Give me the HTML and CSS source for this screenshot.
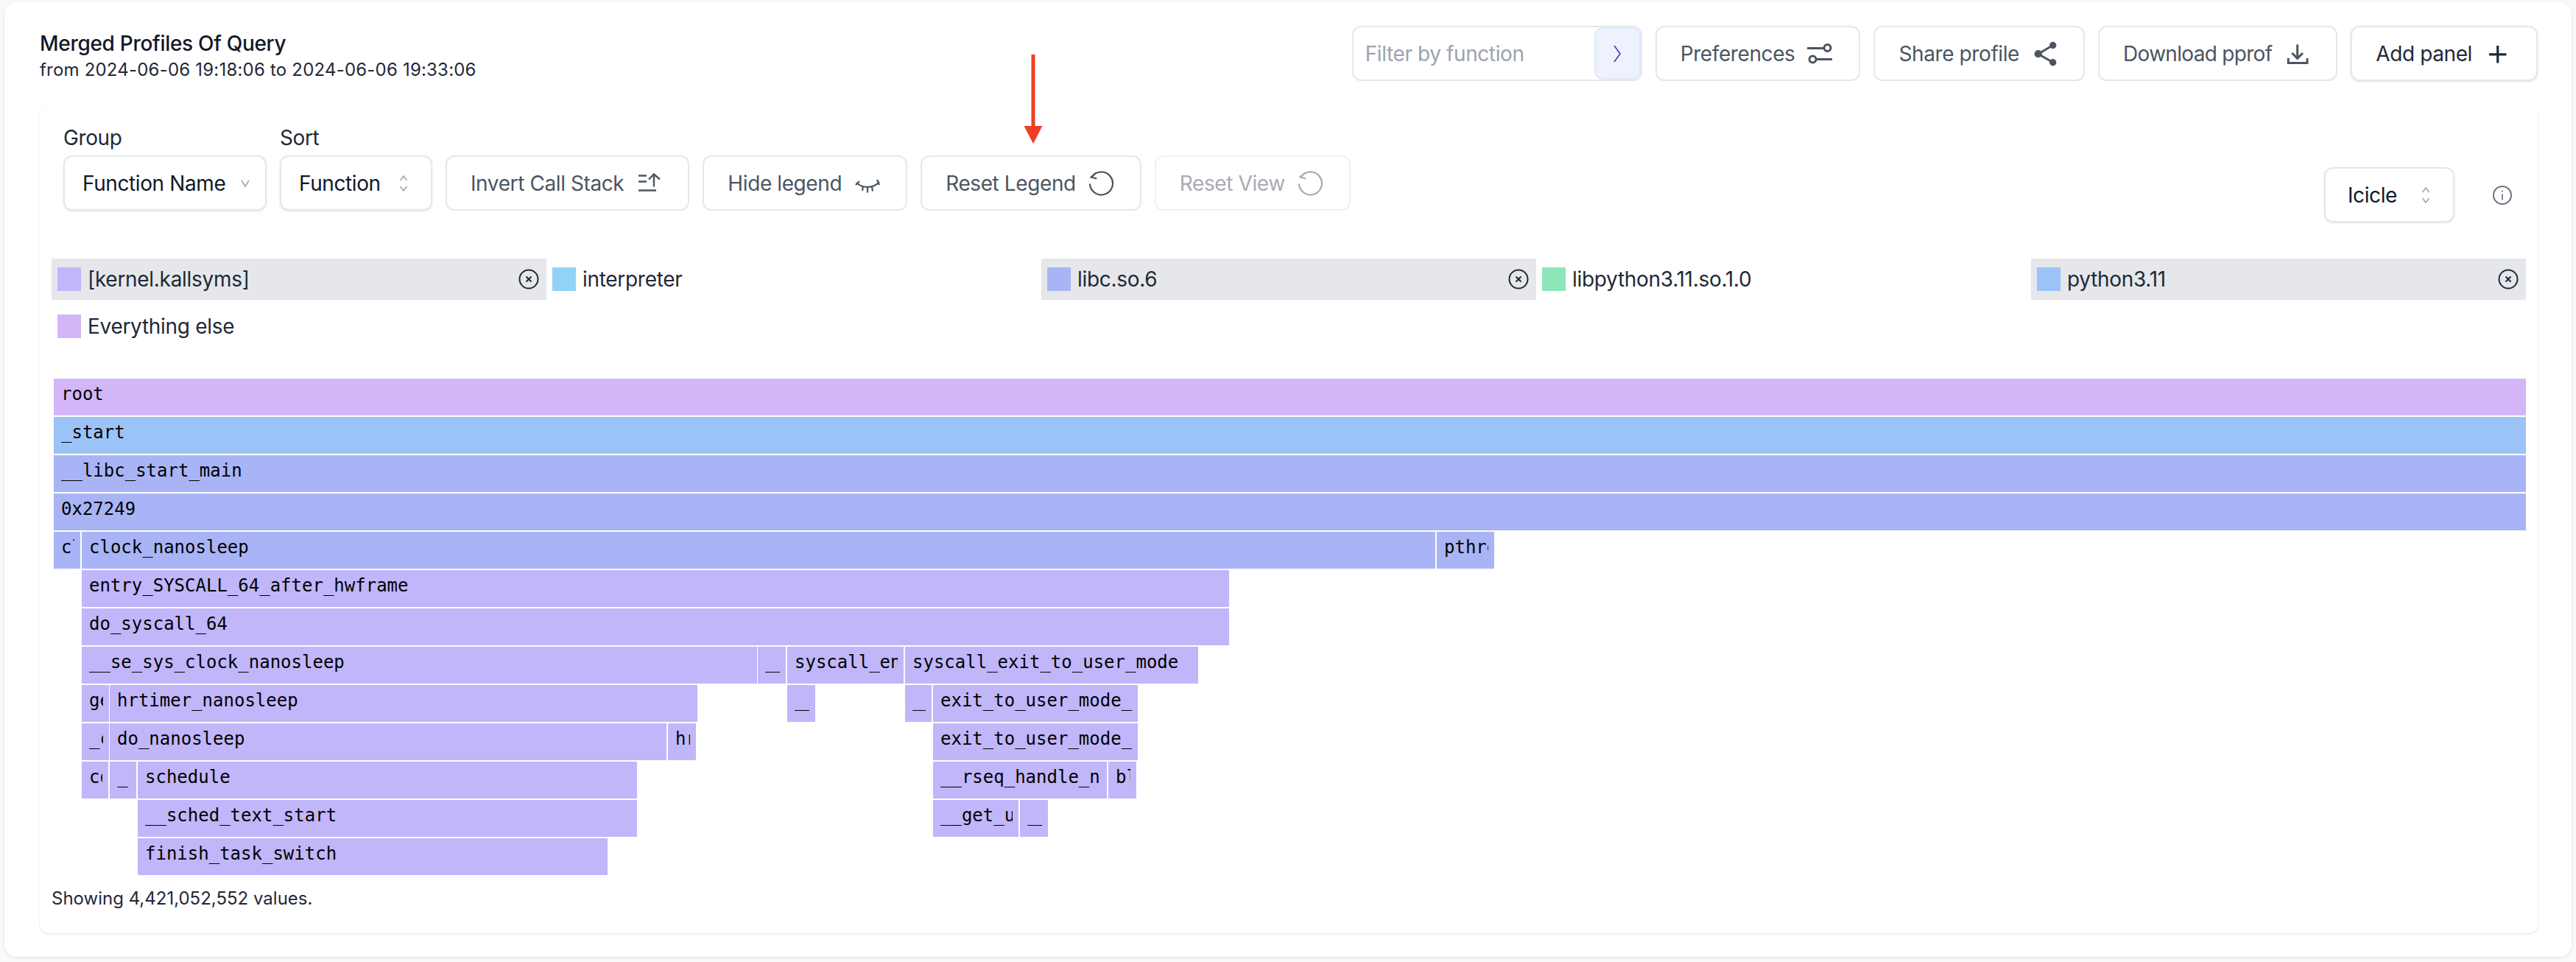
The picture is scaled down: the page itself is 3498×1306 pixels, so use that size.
FILE: index.html
```html
<!DOCTYPE html>
<html lang="en">
<head>
    <meta charset="UTF-8">
    <title>Merged Profiles Of Query</title>
    <link rel="stylesheet" href="styles.css">
</head>
<body>

<main class="page-card">
    <svg class="annotation" width="28" height="122" viewBox="0 0 28 122">
        <rect x="11.5" y="0" width="5" height="100" fill="#ee3f24"/>
        <polygon points="1.5,97 26.5,97 14,121" fill="#ee3f24"/>
    </svg>

    <header class="page-header">
        <div>
            <div class="title">Merged Profiles Of Query</div>
            <div class="subtitle">from 2024-06-06 19:18:06 to 2024-06-06 19:33:06</div>
        </div>
        <div class="header-actions">
            <div class="filter">
                <span class="filter-placeholder">Filter by function</span>
                <span class="filter-go">
                    <svg width="14" height="30" viewBox="0 0 14 30"><path d="M3 4l8 11-8 11" fill="none" stroke="#4338ca" stroke-width="1.6"/></svg>
                </span>
            </div>
            <button class="btn">Preferences
                <svg class="icon" viewBox="0 0 40 40" fill="none" stroke="#4b5563" stroke-width="3">
                    <path d="M2 12.5h23"/><circle cx="29.5" cy="12" r="4.5"/>
                    <circle cx="9.5" cy="27.5" r="4.5"/><path d="M15 27.5h21"/>
                </svg>
            </button>
            <button class="btn">Share profile
                <svg class="icon" viewBox="0 0 40 40" fill="#4b5563" stroke="#4b5563" stroke-width="3">
                    <path d="M30.7 8.5L10.7 20.2l20 11.6" fill="none"/>
                    <circle cx="30.7" cy="8.5" r="3.2"/><circle cx="30.7" cy="31.8" r="3.2"/><circle cx="10.7" cy="20.2" r="3.6"/>
                </svg>
            </button>
            <button class="btn btn-download">Download pprof
                <svg class="icon" viewBox="0 0 40 40" fill="none" stroke="#4b5563" stroke-width="3">
                    <path d="M19.7 7.5V26M12.3 19l7.4 7.4L27 19"/>
                    <path d="M7.3 26v6.5H33V26"/>
                </svg>
            </button>
            <button class="btn btn-dark">Add panel
                <svg class="icon" viewBox="0 0 40 40" fill="none" stroke="#1f2937" stroke-width="3.2">
                    <path d="M19.7 9v23.5M8 20.8h23.4"/>
                </svg>
            </button>
        </div>
    </header>

    <section class="panel">
        <div class="toolbar">
            <div class="toolbar-left">
                <div class="field">
                    <label>Group</label>
                    <button class="select select-group">Function Name
                        <svg class="caret" width="14" height="22" viewBox="0 0 14 22"><path d="M2 7l5 8 5-8" fill="none" stroke="#9ca3af" stroke-width="1.5"/></svg>
                    </button>
                </div>
                <div class="field">
                    <label>Sort</label>
                    <button class="select select-sort">Function
                        <svg class="caret" width="14" height="22" viewBox="0 0 14 22"><path d="M2.5 7l4.5-6 4.500 6M2.500 15l4.500 6 4.500-6" fill="none" stroke="#9ca3af" stroke-width="1.5"/></svg>
                    </button>
                </div>
                <button class="btn">Invert Call Stack
                    <svg class="icon" viewBox="0 0 40 40" fill="none" stroke="#4b5563" stroke-width="2.4">
                        <path d="M5 9.500h11M5 17.500h11M5 29.500h24"/>
                        <path d="M26 7.500v17M19 14.500l7-7 8 7"/>
                    </svg>
                </button>
                <button class="btn">Hide legend
                    <svg class="icon" viewBox="0 0 40 40" fill="none" stroke="#4b5563" stroke-width="2.2">
                        <path d="M5 19c8 8 23 8 31-1"/>
                        <path d="M9 17l-5 5M33 15l3 7M14 24l-1 6M20 25.500v7M26 24.500l1 6"/>
                    </svg>
                </button>
                <button class="btn">Reset Legend
                    <svg class="icon" viewBox="0 0 40 40" fill="none" stroke="#4b5563" stroke-width="2.2">
                        <path d="M4 20.500A15.500 15.500 0 1 0 6.500 11.500"/>
                        <path d="M12.500 5.500L5.700 11.500l7.600 2"/>
                    </svg>
                </button>
                <button class="btn btn-disabled">Reset View
                    <svg class="icon" viewBox="0 0 40 40" fill="none" stroke="#a8acb3" stroke-width="2.2">
                        <path d="M4 20.500A15.500 15.500 0 1 0 6.500 11.500"/>
                        <path d="M12.500 5.500L5.700 11.500l7.600 2"/>
                    </svg>
                </button>
            </div>
            <div class="toolbar-right">
                <button class="select select-viz">Icicle
                    <svg class="caret" width="14" height="22" viewBox="0 0 14 22"><path d="M2.500 7l4.500-6 4.500 6M2.500 15l4.500 6 4.500-6" fill="none" stroke="#9ca3af" stroke-width="1.5"/></svg>
                </button>
                <svg class="info" width="28" height="28" viewBox="0 0 28 28" fill="none" stroke="#6b7280" stroke-width="2">
                    <circle cx="14" cy="14" r="12"/><path d="M14 12.500v8M14 7.500v2" stroke-width="1.700"/>
                </svg>
            </div>
        </div>

        <div class="legend">
            <div class="legend-item legend-active">
                <span class="swatch kernel"></span><span class="legend-name">[kernel.kallsyms]</span>
                <svg class="legend-close" width="28" height="28" viewBox="0 0 28 28" fill="none" stroke="#1f2937" stroke-width="2"><circle cx="14" cy="14" r="12.500"/><path d="M10.500 10.500l7 7M17.500 10.500l-7 7"/></svg>
            </div>
            <div class="legend-item">
                <span class="swatch interpreter"></span><span class="legend-name">interpreter</span>
            </div>
            <div class="legend-item legend-active">
                <span class="swatch libc"></span><span class="legend-name">libc.so.6</span>
                <svg class="legend-close" width="28" height="28" viewBox="0 0 28 28" fill="none" stroke="#1f2937" stroke-width="2"><circle cx="14" cy="14" r="12.500"/><path d="M10.500 10.500l7 7M17.500 10.500l-7 7"/></svg>
            </div>
            <div class="legend-item">
                <span class="swatch libpython"></span><span class="legend-name">libpython3.11.so.1.0</span>
            </div>
            <div class="legend-item legend-active">
                <span class="swatch python"></span><span class="legend-name">python3.11</span>
                <svg class="legend-close" width="28" height="28" viewBox="0 0 28 28" fill="none" stroke="#1f2937" stroke-width="2"><circle cx="14" cy="14" r="12.500"/><path d="M10.500 10.500l7 7M17.500 10.500l-7 7"/></svg>
            </div>
            <div class="legend-item">
                <span class="swatch other"></span><span class="legend-name">Everything else</span>
            </div>
        </div>

        <div class="flame">
            <div class="flame-row"><div class="frame other full"><span>root</span></div></div>
            <div class="flame-row"><div class="frame python full"><span>_start</span></div></div>
            <div class="flame-row"><div class="frame libc full"><span>__libc_start_main</span></div></div>
            <div class="flame-row"><div class="frame libc full"><span>0x27249</span></div></div>
            <div class="flame-row">
                <div class="frame libc" style="width:36px"><span>cl</span></div>
                <div class="frame libc" style="margin-left:2px;width:1838px"><span>clock_nanosleep</span></div>
                <div class="frame libc" style="margin-left:2px;width:78px"><span>pthre</span></div>
            </div>
            <div class="flame-row">
                <div class="frame kernel" style="margin-left:38px;width:1558px"><span>entry_SYSCALL_64_after_hwframe</span></div>
            </div>
            <div class="flame-row">
                <div class="frame kernel" style="margin-left:38px;width:1558px"><span>do_syscall_64</span></div>
            </div>
            <div class="flame-row">
                <div class="frame kernel" style="margin-left:38px;width:917px"><span>__se_sys_clock_nanosleep</span></div>
                <div class="frame kernel" style="margin-left:1px;width:38px"><span>__</span></div>
                <div class="frame kernel" style="margin-left:2px;width:158px"><span>syscall_en</span></div>
                <div class="frame kernel" style="margin-left:2px;width:398px"><span>syscall_exit_to_user_mode</span></div>
            </div>
            <div class="flame-row">
                <div class="frame kernel" style="margin-left:38px;width:37px"><span>ge</span></div>
                <div class="frame kernel" style="margin-left:1px;width:798px"><span>hrtimer_nanosleep</span></div>
                <div class="frame kernel" style="margin-left:122px;width:38px"><span>__</span></div>
                <div class="frame kernel" style="margin-left:122px;width:36px"><span>__</span></div>
                <div class="frame kernel" style="margin-left:2px;width:278px"><span>exit_to_user_mode_</span></div>
            </div>
            <div class="flame-row">
                <div class="frame kernel" style="margin-left:38px;width:37px"><span>_c</span></div>
                <div class="frame kernel" style="margin-left:1px;width:756px"><span>do_nanosleep</span></div>
                <div class="frame kernel" style="margin-left:2px;width:38px"><span>hr</span></div>
                <div class="frame kernel" style="margin-left:322px;width:278px"><span>exit_to_user_mode_</span></div>
            </div>
            <div class="flame-row">
                <div class="frame kernel" style="margin-left:38px;width:36px"><span>co</span></div>
                <div class="frame kernel" style="margin-left:2px;width:36px"><span>_r</span></div>
                <div class="frame kernel" style="margin-left:2px;width:678px"><span>schedule</span></div>
                <div class="frame kernel" style="margin-left:402px;width:236px"><span>__rseq_handle_no</span></div>
                <div class="frame kernel" style="margin-left:2px;width:38px"><span>bl</span></div>
            </div>
            <div class="flame-row">
                <div class="frame kernel" style="margin-left:114px;width:678px"><span>__sched_text_start</span></div>
                <div class="frame kernel" style="margin-left:402px;width:116px"><span>__get_u</span></div>
                <div class="frame kernel" style="margin-left:2px;width:38px"><span>__</span></div>
            </div>
            <div class="flame-row">
                <div class="frame kernel" style="margin-left:114px;width:638px"><span>finish_task_switch</span></div>
            </div>
        </div>

        <p class="values">Showing 4,421,052,552 values.</p>
    </section>
</main>

</body>
</html>
```
FILE: styles.css
```css
* {
    box-sizing: border-box;
}

body {
    margin: 0;
    padding: 3px 6px 7px;
    background-color: #f8f9fb;
    font-family: Inter, "Liberation Sans", sans-serif;
    color: #1f2937;
}

.page-card {
    position: relative;
    height: 1296px;
    padding: 32px 46px 0 48px;
    background: #fff;
    border-radius: 16px;
    box-shadow: 0 1px 3px rgba(0, 0, 0, 0.12);
}

.annotation {
    position: absolute;
    left: 1383px;
    top: 71px;
}

.page-header {
    display: flex;
    justify-content: space-between;
    height: 108px;
}

.title {
    margin-top: 6px;
    font-size: 28px;
    line-height: 36px;
    font-weight: 500;
    letter-spacing: -0.3px;
    color: #111827;
}

.subtitle {
    margin-top: 2px;
    font-size: 24px;
    line-height: 32px;
    letter-spacing: 0.2px;
    color: #1f2937;
}

.header-actions,
.toolbar-left,
.toolbar-right {
    display: flex;
    gap: 18px;
}

.toolbar-left {
    align-items: flex-end;
    align-self: flex-start;
}

.btn,
.select {
    display: flex;
    align-items: center;
    height: 75px;
    font-family: inherit;
    font-size: 28px;
    font-weight: 400;
    letter-spacing: -0.4px;
    background: #fff;
    border: 2px solid #e5e7eb;
    border-radius: 12px;
    white-space: nowrap;
}

.btn {
    gap: 15px;
    padding: 0 32px;
    color: #4b5563;
}

.btn-download {
    letter-spacing: -0.7px;
}

.btn-dark {
    color: #1f2937;
    box-shadow: 0 1px 3px rgba(0, 0, 0, 0.12);
}

.btn-disabled {
    color: #a8acb3;
    border-color: #f0f1f3;
}

.icon {
    width: 40px;
    height: 40px;
    flex: none;
}

.filter {
    display: flex;
    align-items: center;
    justify-content: space-between;
    width: 394px;
    height: 75px;
    padding-left: 16px;
    border: 2px solid #e5e7eb;
    border-radius: 12px;
}

.filter-placeholder {
    font-size: 28px;
    letter-spacing: -0.4px;
    color: #9ca3af;
}

.filter-go {
    display: flex;
    align-items: center;
    justify-content: center;
    width: 63px;
    height: 71px;
    background: #eef2ff;
    border: 2px solid #e0e7ff;
    border-radius: 12px;
}

.panel {
    height: 1124px;
    padding: 24px 16px 0;
    background: #fff;
    border-radius: 12px;
    box-shadow: 0 1px 3px rgba(0, 0, 0, 0.12);
}

.toolbar {
    display: flex;
    justify-content: space-between;
    height: 135px;
    padding: 0 18px 0 16px;
}

.field label {
    display: block;
    height: 44px;
    font-size: 28px;
    line-height: 40px;
    letter-spacing: -0.4px;
    color: #1f2937;
}

.select {
    justify-content: space-between;
    padding: 0 24px;
    color: #111827;
    box-shadow: 0 1px 3px rgba(0, 0, 0, 0.1);
}

.select-group {
    width: 276px;
    padding-right: 20px;
}

.select-sort {
    width: 207px;
    padding-right: 30px;
}

.select-viz {
    width: 177px;
    padding: 0 30px;
}

.toolbar-right {
    align-items: center;
    gap: 51px;
    height: 75px;
    margin-top: 60px;
}

.info {
    flex: none;
}

.legend {
    display: grid;
    grid-template-columns: repeat(5, 672px);
    grid-auto-rows: 56px;
    row-gap: 8px;
    margin-top: 49px;
}

.legend-item {
    display: flex;
    align-items: center;
    padding: 0 10px 0 8px;
    font-size: 28px;
    color: #1f2937;
}

.legend-active {
    background: #e5e7eb;
}

.legend-name {
    margin-left: 9px;
    white-space: nowrap;
    letter-spacing: -0.3px;
}

.legend-close {
    margin-left: auto;
}

.swatch {
    width: 32px;
    height: 32px;
    flex: none;
}

.flame {
    margin-top: 43px;
    margin-left: 3px;
}

.flame-row {
    display: flex;
    height: 50px;
    margin-bottom: 2px;
}

.frame {
    flex: none;
    height: 50px;
    padding: 0 8px 0 10px;
    font-family: "DejaVu Sans Mono", monospace;
    font-size: 24px;
    line-height: 42px;
    color: #000;
}

.frame span {
    display: block;
    overflow: hidden;
    white-space: nowrap;
}

.full {
    width: 100%;
}

.other {
    background: #d3b6f8;
}

.python {
    background: #9cc3f7;
}

.libc {
    background: #a8b4f5;
}

.kernel {
    background: #c0b6f9;
}

.interpreter {
    background: #92d1f8;
}

.libpython {
    background: #8de5b9;
}

.values {
    margin: 16px 0 0;
    font-size: 24px;
    line-height: 32px;
    color: #1f2937;
}
```
